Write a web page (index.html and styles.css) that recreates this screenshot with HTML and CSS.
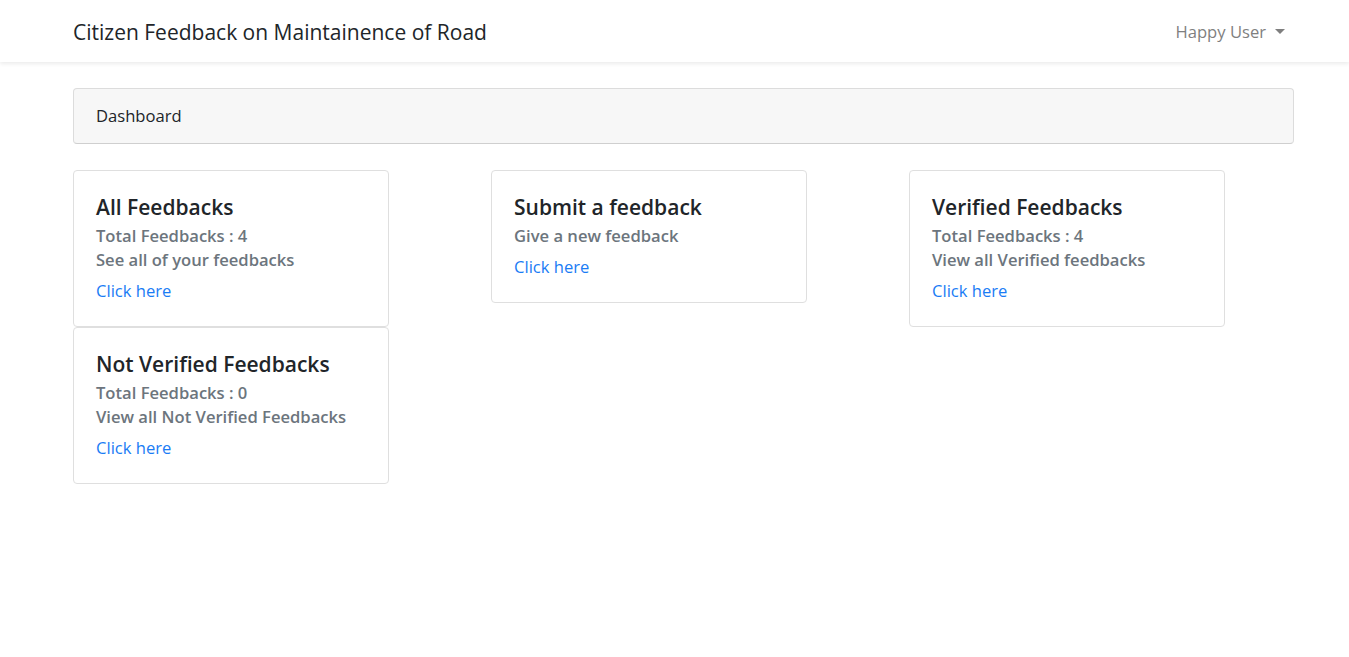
FILE: index.html
```html
<!DOCTYPE html>
<html lang="en">
<head>
<meta charset="utf-8">
<title>Citizen Feedback on Maintainence of Road</title>
<link rel="stylesheet" href="styles.css">
</head>
<body>
<nav class="navbar">
  <div class="navbar-inner">
    <a class="brand" href="#">Citizen Feedback on Maintainence of Road</a>
    <a class="user" href="#">Happy User <span class="caret"></span></a>
  </div>
</nav>
<main class="main">
  <div class="panel-header">Dashboard</div>
  <div class="cards">
    <div class="card">
      <h5 class="card-title">All Feedbacks</h5>
      <h6 class="card-subtitle">Total Feedbacks : 4</h6>
      <h6 class="card-subtitle">See all of your feedbacks</h6>
      <a class="card-link" href="#">Click here</a>
    </div>
    <div class="card">
      <h5 class="card-title">Submit a feedback</h5>
      <h6 class="card-subtitle">Give a new feedback</h6>
      <a class="card-link" href="#">Click here</a>
    </div>
    <div class="card">
      <h5 class="card-title">Verified Feedbacks</h5>
      <h6 class="card-subtitle">Total Feedbacks : 4</h6>
      <h6 class="card-subtitle">View all Verified feedbacks</h6>
      <a class="card-link" href="#">Click here</a>
    </div>
    <div class="card">
      <h5 class="card-title">Not Verified Feedbacks</h5>
      <h6 class="card-subtitle">Total Feedbacks : 0</h6>
      <h6 class="card-subtitle">View all Not Verified Feedbacks</h6>
      <a class="card-link" href="#">Click here</a>
    </div>
  </div>
</main>
</body>
</html>
```
FILE: styles.css
```css
* { box-sizing: border-box; }
html, body { margin: 0; padding: 0; }
body {
  font-family: "Open Sans", "Noto Sans", sans-serif;
  font-size: 16.6px;
  line-height: 1.5;
  color: #212529;
  background: #fff;
}
a { text-decoration: none; }
.navbar {
  height: 62px;
  background: #fff;
  box-shadow: 0 2px 4px rgba(0,0,0,.08);
}
.navbar-inner {
  height: 100%;
  margin: 0 64px 0 73px;
  display: flex;
  align-items: center;
  justify-content: space-between;
}
.brand {
  font-size: 21px;
  color: #212529;
  line-height: 30px;
  padding-top: 2px;
}
.user {
  color: #7f7f7f;
  font-size: 16.6px;
  display: flex;
  align-items: center;
  padding-top: 2px;
}
.caret {
  display: inline-block;
  margin-left: 9px;
  border-top: 5px solid #7f7f7f;
  border-left: 5px solid transparent;
  border-right: 5px solid transparent;
  width: 0; height: 0;
}
.main {
  margin: 26px 55px 0 73px;
}
.panel-header {
  height: 56px;
  background: #f7f7f7;
  border: 1px solid #dcdcdc;
  border-bottom-color: #cfcfcf;
  border-radius: 4px;
  padding: 0 22px;
  display: flex;
  align-items: center;
}
.cards {
  margin-top: 26px;
  display: grid;
  grid-template-columns: repeat(3, 316px);
  column-gap: 102px;
  align-items: start;
}
.card {
  border: 1px solid #dfdfdf;
  border-radius: 4px;
  padding: 21px 22px 23px;
  display: flex;
  flex-direction: column;
  align-items: flex-start;
}
.card-title {
  margin: 0 0 2px;
  font-size: 21px;
  font-weight: 600;
  line-height: 30px;
  color: #212529;
}
.card-subtitle {
  margin: 0;
  font-size: 16.6px;
  font-weight: 600;
  line-height: 24px;
  color: #6c757d;
}
.card-link {
  margin-top: 7px;
  color: #1a7cf5;
  line-height: 24px;
}
```
